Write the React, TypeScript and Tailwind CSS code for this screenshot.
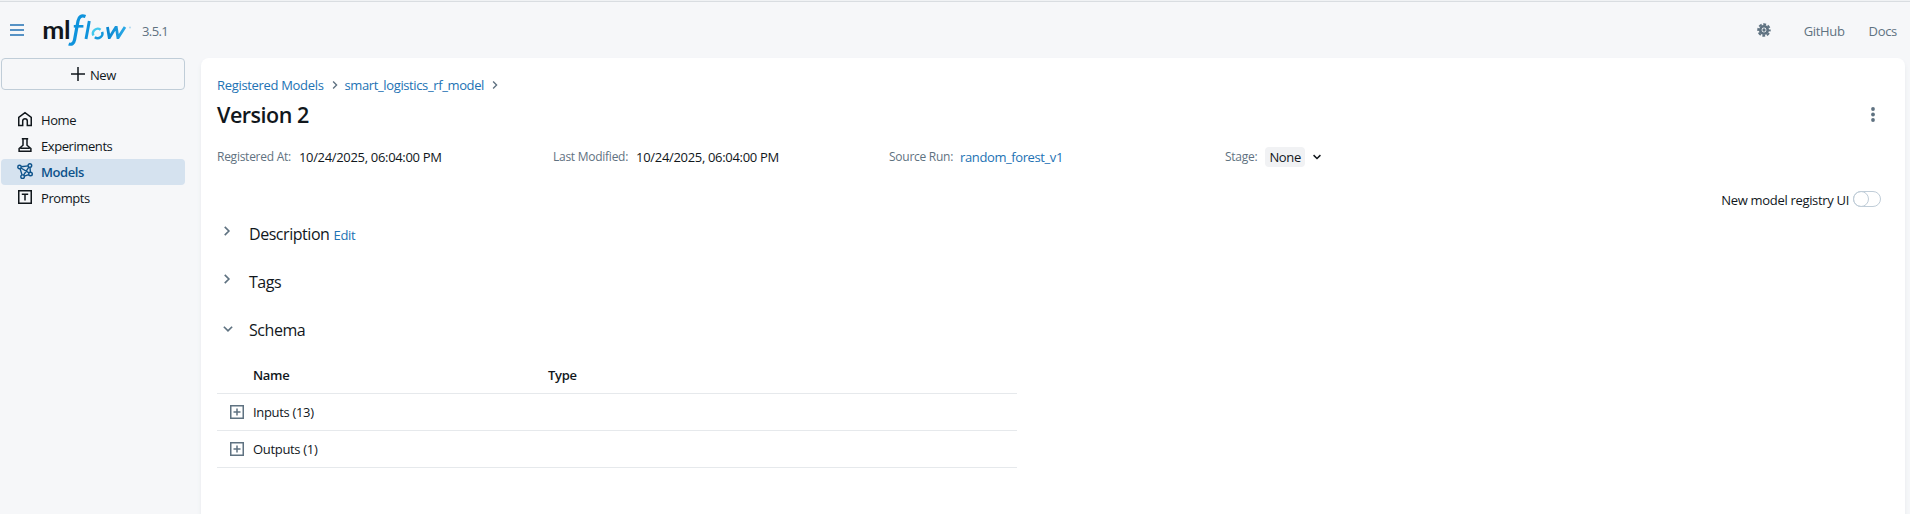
import type { ReactNode } from "react";

function ChevronRight({ className }: { className: string }) {
  return (
    <svg viewBox="0 0 16 16" fill="none" stroke="currentColor" className={className}>
      <path d="M5 2.500l5.500 5.500L5 13.500" strokeWidth="2.200" />
    </svg>
  );
}

function ChevronDown({ className }: { className: string }) {
  return (
    <svg viewBox="0 0 16 16" fill="none" stroke="currentColor" className={className}>
      <path d="M2.500 5l5.500 5.500L13.500 5" strokeWidth="2.300" />
    </svg>
  );
}

function Logo() {
  return (
    <svg width="92" height="36" viewBox="0 0 92 36" className="block">
      <defs>
        <linearGradient id="flow" x1="0" y1="0" x2="1" y2="0">
          <stop offset="0" stopColor="#0a86d0" />
          <stop offset="1" stopColor="#2aa9e6" />
        </linearGradient>
      </defs>
      <text x="-.8" y="27" fontFamily="Lato" fontWeight="700" fontSize="24.500" fill="#10161c" textLength="28" lengthAdjust="spacingAndGlyphs">ml</text>
      <g fill="none" stroke="#0f93dc" strokeWidth="3.200">
        <path d="M42.500 4.600c-4.300-1.700-6.700.2-7.500 4.400L31.600 27.600c-.8 4-2.800 5.400-5.900 4.300" />
        <path d="M30.800 14.300h9.600" strokeWidth="2.600" />
        <path d="M46.300 9l-3.300 18" strokeWidth="2.900" />
      </g>
      <path d="M50.400 23.600a4.800 4.800 0 0 1 7.200-5.900" fill="none" stroke="#43c9ed" strokeWidth="2.400" />
      <path d="M59.200 19.800a4.800 4.800 0 0 1-7.400 5.400" fill="none" stroke="#1498dc" strokeWidth="2.400" />
      <path d="M64.500 15l1.700 10.500h.3L72.800 15.300h.5l1.600 10.200h.3L82 15" fill="none" stroke="url(#flow)" strokeWidth="2.800" />
      <circle cx="87" cy="15.500" r=".9" fill="#a9d5ee" />
    </svg>
  );
}

function NavItem({ icon, label, active }: { icon: ReactNode; label: string; active?: boolean }) {
  return (
    <a className={`flex h-[26px] items-center rounded pl-4 tracking-[-0.42px] ${active ? "bg-[#d5e2ef] font-semibold text-[#0e538b]" : "text-[#11171c]"}`}>
      <svg width="16" height="16" viewBox="0 0 16 16" fill="none" stroke="currentColor" strokeWidth="1.5" className="mr-2 mb-0.5 shrink-0">
        {icon}
      </svg>
      <span>{label}</span>
    </a>
  );
}

function Sidebar() {
  return (
    <aside className="w-[185px] shrink-0 pl-px">
      <button className="flex h-8 w-full items-center justify-center gap-1 rounded border border-[#c0cdd8] text-[13px] text-[#11171c]">
        <svg width="16" height="16" viewBox="0 0 16 16" stroke="currentColor" strokeWidth="1.5">
          <path d="M8 1v14M1 8h14" />
        </svg>
        <span className="pt-0.5">New</span>
      </button>
      <nav className="mt-[17px]">
        <NavItem
          label="Home"
          icon={<path d="M1.750 6.300L8 1.600l6.250 4.700v8.200H10.300V10a2.300 2.300 0 0 0-4.600 0v4.500H1.750z" />}
        />
        <NavItem
          label="Experiments"
          icon={<path d="M4.800 1.750h6.400M6 1.750v6.500l-3.900 3.300v2.700h11.800v-2.700L10 8.250v-6.500M3.300 11.200h9.400" />}
        />
        <NavItem
          label="Models"
          active
          icon={
            <g strokeWidth="1.400">
              <circle cx="2.500" cy="4" r="1.700" />
              <circle cx="12.900" cy="2.600" r="1.800" />
              <circle cx="13.500" cy="11" r="1.800" />
              <circle cx="5.600" cy="13.700" r="1.800" />
              <path d="M4.200 3.800l6.900-.9M3.100 5.600l1.900 6.300M13 4.400l.4 4.800M11.800 4.100l-5.200 8M7.300 13.100l4.500-1.500M4 5l8 4.900" />
            </g>
          }
        />
        <NavItem
          label="Prompts"
          icon={<path d="M1.750 1.750h12.500v12.500H1.750zM4.800 5.200h6.400M8 5.200v6.200" />}
        />
      </nav>
    </aside>
  );
}

function SectionRow({ title, open, action }: { title: string; open?: boolean; action?: string }) {
  return (
    <div className="flex h-6 items-center text-[#11171c]">
      <div className="mr-3 w-5 text-[#5f7281]">
        {open ? <ChevronDown className="ml-[5px] h-3 w-3" /> : <ChevronRight className="mb-1 ml-1 h-3 w-3" />}
      </div>
      <span className="pt-px text-[16px] tracking-[-0.45px]">{title}</span>
      {action && <a className="ml-1 pt-1 text-[#2272b4]">{action}</a>}
    </div>
  );
}

function SchemaRow({ label }: { label: string }) {
  return (
    <div className="flex h-[37px] items-center border-b border-[#e6e9ec] pl-[13px]">
      <svg width="14" height="14" viewBox="0 0 14 14" fill="none" stroke="#5f7281" strokeWidth="1.500" className="mr-[9px]">
        <path d="M.75.75h12.500v12.500H.75zM7 3.500v7M3.500 7h7" />
      </svg>
      <span>{label}</span>
    </div>
  );
}

function MetaField({ label, children }: { label: string; children: ReactNode }) {
  return (
    <div className="flex w-[336px] items-center gap-2">
      <span className="text-[12px] tracking-[-0.26px] text-[#5f7281]">{label}</span>
      {children}
    </div>
  );
}

export default function App() {
  return (
    <div className="flex h-[514px] flex-col overflow-hidden border-t border-[#f0f2f4] bg-[#f6f7f9] font-['Open_Sans','Noto_Sans',sans-serif] text-[13px] leading-5 tracking-[-0.32px]">
      <header className="flex h-[57px] shrink-0 items-center border-t border-[#d9dde1] pr-[13px] pl-[10px] text-[#5f7281]">
        <svg width="14" height="12" viewBox="0 0 14 12" stroke="#2272b4" strokeWidth="1.500" className="mr-[19px]">
          <path d="M0 1h14M0 6h14M0 11h14" />
        </svg>
        <Logo />
        <span className="ml-[7px] pt-px tracking-[-0.6px]">3.5.1</span>
        <svg width="14" height="14" viewBox="0 0 16 16" fill="none" stroke="currentColor" className="ml-auto">
          <circle cx="8" cy="8" r="4.300" strokeWidth="3" />
          <circle cx="8" cy="8" r="6.600" strokeWidth="2.200" strokeDasharray="3.300 1.884" strokeDashoffset="1.650" />
          <circle cx="8" cy="8" r="1.900" fill="currentColor" stroke="none" />
        </svg>
        <span className="ml-[33px] pt-0.5">GitHub</span>
        <span className="ml-6 pt-0.5">Docs</span>
      </header>
      <div className="flex min-h-0 flex-1">
        <Sidebar />
        <main className="mr-[5px] ml-4 flex-1 rounded-t-lg bg-white px-4 pt-[17px] shadow-[0_3px_4px_#e6eaee]">
          <div className="flex h-5 items-center text-[#2272b4]">
            <a>Registered Models</a>
            <ChevronRight className="mx-1.5 h-2.5 w-2.5 text-[#5f7281]" />
            <a className="-ml-px tracking-[-0.38px]">smart_logistics_rf_model</a>
            <ChevronRight className="mx-1.5 h-2.5 w-2.5 text-[#5f7281]" />
          </div>
          <div className="flex h-[38px] items-center">
            <h1 className="pt-0.5 text-[21.5px] font-semibold tracking-[-0.5px] text-[#11171c]">Version 2</h1>
            <svg width="4" height="15" viewBox="0 0 4 15" fill="#5f7281" className="mr-[14px] ml-auto">
              <circle cx="2" cy="2" r="1.900" />
              <circle cx="2" cy="7.500" r="1.900" />
              <circle cx="2" cy="13" r="1.900" />
            </svg>
          </div>
          <div className="mt-3 flex h-6 items-center text-[#11171c]">
            <MetaField label="Registered At:">10/24/2025, 06:04:00 PM</MetaField>
            <MetaField label="Last Modified:">10/24/2025, 06:04:00 PM</MetaField>
            <MetaField label="Source Run:"><a className="-ml-px tracking-[-0.4px] text-[#2272b4]">random_forest_v1</a></MetaField>
            <MetaField label="Stage:">
              <span className="rounded bg-[#f1f2f4] px-1">None</span>
              <ChevronDown className="-ml-px h-2.5 w-2.5" />
            </MetaField>
          </div>
          <div className="mt-[18px] mr-2 flex h-6 items-center justify-end gap-1 text-[#11171c]">
            <span className="pt-0.5">New model registry UI</span>
            <div className="h-4 w-7 rounded-full border border-[#c0cdd8]"><div className="-mt-px -ml-px h-4 w-4 rounded-full border border-[#c0cdd8]" /></div>
          </div>
          <div className="mt-2.5 flex flex-col gap-6">
            <SectionRow title="Description" action="Edit" />
            <SectionRow title="Tags" />
            <SectionRow title="Schema" open />
          </div>
          <div className="mt-4 w-[800px] text-[#11171c]">
            <div className="flex h-[37px] items-center border-b border-[#e6e9ec] pl-9 font-semibold">
              <span className="w-[295px]">Name</span>
              <span>Type</span>
            </div>
            <SchemaRow label="Inputs (13)" />
            <SchemaRow label="Outputs (1)" />
          </div>
        </main>
      </div>
    </div>
  );
}
